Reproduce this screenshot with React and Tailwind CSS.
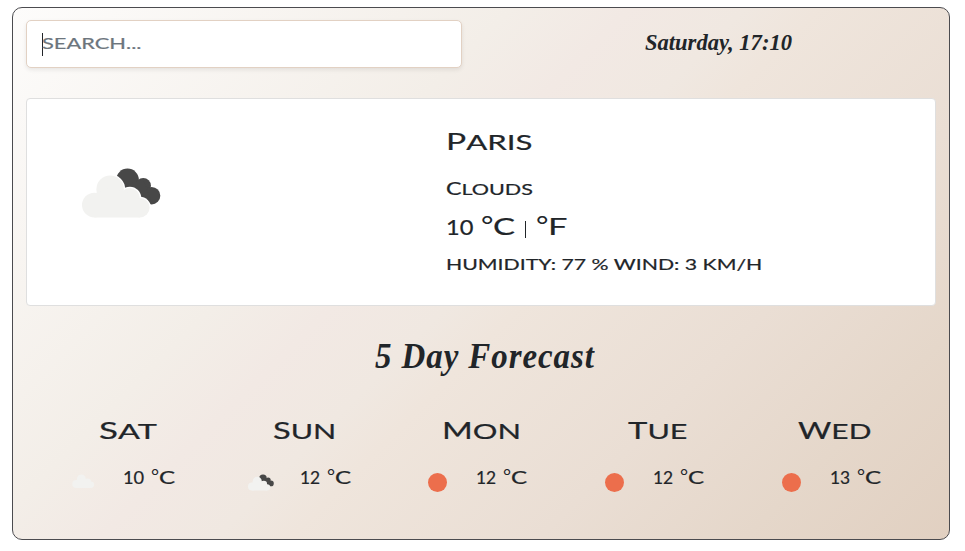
import { useLayoutEffect, useRef, useState } from "react";

// Text stretched horizontally so that it fills its box.
function Fit({ box, text, children }) {
  const ref = useRef(null);
  const [scale, setScale] = useState(1);
  useLayoutEffect(() => {
    const el = ref.current;
    setScale(el.parentElement.offsetWidth / el.offsetWidth);
  }, []);
  return (
    <span className={`block shrink-0 whitespace-nowrap ${box}`}>
      <span ref={ref} className={`inline-block origin-left align-top ${text}`} style={{ transform: `scaleX(${scale})` }}>
        {children}
      </span>
    </span>
  );
}

function Caps({ children }) {
  return (
    <>
      {children[0]}
      <span className="text-[0.93em] uppercase">{children.slice(1)}</span>
    </>
  );
}

// The pale cloud, as overlapping discs on a flat base.
function Puffs({ grow = 0, fill }) {
  return (
    <g fill={fill}>
      <circle cx="103" cy="164" r={37 + grow} />
      <circle cx="150" cy="117" r={41 + grow} />
      <circle cx="209" cy="143" r={30 + grow} />
      <circle cx="239" cy="172" r={29 + grow} />
      <path d="M103 201V130L150 110L209 130L239 201Z" />
    </g>
  );
}

function Cloud({ className, broken, gap }) {
  return (
    <svg viewBox="66 54 236 148" className={className}>
      {broken && (
        <g fill="#484848">
          <circle cx="202" cy="89" r="34" />
          <circle cx="249" cy="106" r="23" />
          <circle cx="274" cy="136" r="26" />
          <path d="M190 105L250 90L272 150L240 160Z" />
        </g>
      )}
      {gap && <Puffs grow={4} fill="#fff" />}
      <Puffs fill="#f2f2f0" />
    </svg>
  );
}

const days = [
  { day: "Sat", w: "w-[58px]", num: "10", nw: "w-[21px]", icon: "cloud" },
  { day: "Sun", w: "w-[64px]", num: "12", nw: "w-[20px]", icon: "broken" },
  { day: "Mon", w: "w-[79px]", num: "12", nw: "w-[20px]", icon: "sun" },
  { day: "Tue", w: "w-[60px]", num: "12", nw: "w-[20px]", icon: "sun" },
  { day: "Wed", w: "w-[74px]", num: "13", nw: "w-[20px]", icon: "sun" },
];

function Day({ day, w, num, nw, icon }) {
  return (
    <div className="flex flex-col items-center">
      <Fit box={`${w} h-[36px]`} text="text-[23.5px] leading-[36px]">
        <Caps>{day}</Caps>
      </Fit>
      <div className="mt-[18px] flex w-[120px] items-start">
        <div className="flex h-[34px] w-[55px] shrink-0 items-start">
          {icon === "cloud" && <Cloud className="ml-[4px] mt-[6px] h-[16px] w-[26px]" />}
          {icon === "broken" && <Cloud broken className="ml-[3px] mt-[8px] h-[17px] w-[26px]" />}
          {icon === "sun" && <span className="ml-[7px] mt-[7px] size-[19px] rounded-full bg-[#ec6e4c]" />}
        </div>
        <Fit box={nw} text="text-[16.5px] leading-[25px]">{num}</Fit>
        <Fit box="ml-[7px] w-[8px] -translate-y-[2px]" text="text-[17px] leading-[24px] [-webkit-text-stroke-width:0px]">°</Fit>
        <Fit box="w-[16px]" text="text-[16.5px] leading-[25px]">C</Fit>
      </div>
    </div>
  );
}

export default function App() {
  return (
    <div className="h-[551px] w-[965px] overflow-hidden bg-white pl-[12px] pt-[7px] font-['Lato',sans-serif] text-[#212529] [-webkit-text-stroke-width:0.2px]">
      <div className="h-[533px] w-[938px] rounded-[10px] border border-[#4b4b4f] bg-[linear-gradient(135deg,#fdfcfb_0%,#f3eee8_34%,#f2e9e4_42%,#f0e8e1_50%,#efe5dc_55%,#eaded4_72%,#e5d7ca_86%,#e1d0c1_100%)] px-[13px] pt-[12px]">
        <div className="flex h-[48px]">
          <div className="flex w-[436px] items-center rounded-[5px] border border-[#e2d1c3] bg-white pl-[15px] shadow-[0_2px_4px_rgba(0,0,0,0.08)]">
            <span className="h-[23px] w-px bg-[#212529]" />
            <Fit box="-ml-px w-[100px] h-[24px]" text="text-[15.5px] leading-[22px] text-[#6c757d]">SEARCH...</Fit>
          </div>
          <Fit box="ml-[183px] w-[147px]" text="font-['Liberation_Serif',serif] text-[23px] font-bold italic leading-[45px] [-webkit-text-stroke-width:0px]">
            Saturday, 17:10
          </Fit>
        </div>
        <div className="mt-[30px] flex h-[208px] w-[910px] rounded-[4px] border border-[#dfdfdf] bg-white">
          <Cloud broken gap className="ml-[55px] mt-[69px] h-[50px] w-[79px]" />
          <div className="ml-[285px] pt-[26px]">
            <Fit box="h-[32px] w-[87px]" text="text-[23.5px] leading-[32px]"><Caps>Paris</Caps></Fit>
            <Fit box="mt-[20px] h-[24px] w-[87px]" text="text-[16.5px] leading-[24px]"><Caps>Clouds</Caps></Fit>
            <div className="mt-[8px] flex h-[36px] items-start">
              <Fit box="w-[27px]" text="text-[21px] leading-[36px]">10</Fit>
              <Fit box="ml-[8px] w-[12px] -translate-y-[3px]" text="text-[25px] leading-[36px] [-webkit-text-stroke-width:0px]">°</Fit>
              <Fit box="w-[22px]" text="text-[24px] leading-[34px]">C</Fit>
              <span className="ml-[10px] mt-[12px] h-[17px] w-px bg-[#212529]" />
              <Fit box="ml-[10px] w-[12px] -translate-y-[3px]" text="text-[25px] leading-[36px] [-webkit-text-stroke-width:0px]">°</Fit>
              <Fit box="w-[20px]" text="text-[24px] leading-[34px]">F</Fit>
            </div>
            <Fit box="mt-[7px] h-[24px] w-[316px]" text="text-[15px] leading-[24px]">HUMIDITY: 77 % WIND: 3 KM/H</Fit>
          </div>
        </div>
        <div className="mt-[27px] flex justify-center pl-[8px]">
          <Fit box="h-[47px] w-[220px]" text="font-['Liberation_Serif',serif] text-[35px] font-bold italic leading-[48px] tracking-[1px] [-webkit-text-stroke-width:0px]">
            5 Day Forecast
          </Fit>
        </div>
        <div className="ml-[14px] mt-[32px] grid w-[883px] grid-cols-5">
          {days.map((d) => <Day key={d.day} {...d} />)}
        </div>
      </div>
    </div>
  );
}
